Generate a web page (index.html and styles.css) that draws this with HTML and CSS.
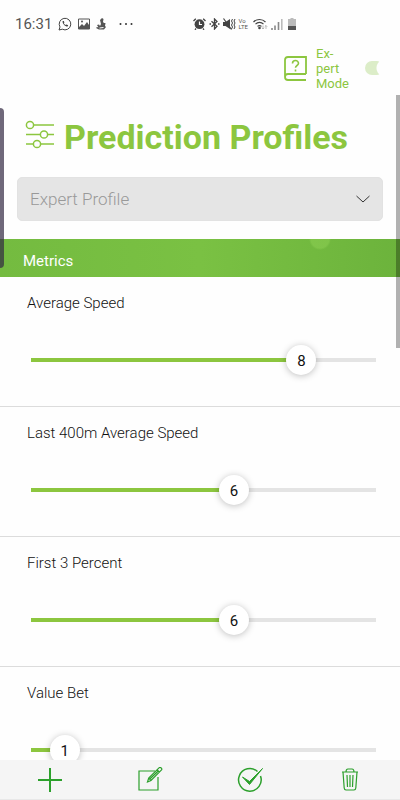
FILE: index.html
```html
<!DOCTYPE html>
<html lang="en">
<head>
    <meta charset="UTF-8">
    <meta name="viewport" content="width=device-width, initial-scale=1.0">
    <title>Prediction Profiles</title>
    <link rel="stylesheet" href="styles.css">
</head>
<body>
    <div class="status-bar">
        <span class="time">16:31</span>
        <div class="status-left">
            <svg width="14" height="14" viewBox="0 0 14 14" fill="none" stroke="#444">
                <path d="M1 13l1-3a5.800 5.800 0 1 1 2.300 2.200z"/>
                <path d="M4.700 4c-.8 2.200 2.300 5.600 4.900 5.600l.6-1.300-1.700-.9-.9.700C6.700 7.600 6.200 7 5.800 6.200l.6-.7-.6-1.500z" fill="#444" stroke="none"/>
            </svg>
            <svg width="12" height="12" viewBox="0 0 12 12">
                <path d="M.5 1h11v10H.5z" fill="none" stroke="#555"/>
                <path d="M1 9l3-3 2 2 3-4 2 3v4H1z" fill="#555"/>
                <circle cx="4" cy="3.500" r="1" fill="#555"/>
            </svg>
            <svg width="10" height="12" viewBox="0 0 10 12" fill="#555">
                <path d="M4 2l2-2 1.500 1L7 4l1 1 1.500 0L9 8l1 1-2 2.500H3L0 10l1-1 1.500.500L1 7l2-.500 1 1.500 1-2z"/>
                <path d="M3.500 10l4-.500" stroke="#fff"/>
            </svg>
            <svg class="more" width="14" height="4" viewBox="0 0 14 4" fill="#333">
                <circle cx="1.500" cy="2" r="1"/><circle cx="7" cy="2" r="1"/><circle cx="12.500" cy="2" r="1"/>
            </svg>
        </div>
        <div class="status-right">
            <!-- alarm -->
            <svg width="13" height="12" viewBox="0 0 13 12">
                <circle cx="6.500" cy="6.200" r="4.900" fill="#444"/>
                <path d="M.5 3l2.300-2.300M12.500 3L10.200.700M3 10.500l-1 1.300M10 10.500l1 1.300" stroke="#444" stroke-width="1.300"/>
                <path d="M6.500 3.500v3H9" fill="none" stroke="#fff" stroke-width="1.200"/>
            </svg>
            <!-- bluetooth -->
            <svg width="11" height="12" viewBox="0 0 11 12" fill="none" stroke="#444" stroke-width="1.300">
                <path d="M2.500 3.300l5.500 5L5.500 11V1L8 3.500 2.500 8.700"/>
                <path d="M.5 6h1.500M9 6h1.500"/>
            </svg>
            <!-- muted -->
            <svg width="13" height="12" viewBox="0 0 13 12">
                <path d="M0 4h2.500L7 1v10L2.500 8H0z" fill="#444"/>
                <path d="M.5.500l8 11" stroke="#444" stroke-width="1.200"/>
                <path d="M9.500 1l-1 2 1 2-1 2 1 2-1 2M12 1l-1 2 1 2-1 2 1 2-1 2" fill="none" stroke="#444"/>
            </svg>
            <span class="volte">Vo<br>LTE</span>
            <!-- wifi -->
            <svg class="wifi" width="15" height="12" viewBox="0 0 15 12" fill="none" stroke="#444" stroke-width="1.200">
                <path d="M.5 4a8.500 8.500 0 0 1 12 0M2.500 6.200a5.500 5.500 0 0 1 8 0M4.500 8.400a3 3 0 0 1 4 0"/>
                <circle cx="6.500" cy="10" r=".7" fill="#444"/>
                <path d="M10 7.500v3.500M8.800 9.800L10 11l1.200-1.200M13 11V7.500M11.800 8.700L13 7.500l1.200 1.200" stroke="#aaa" stroke-width=".8"/>
            </svg>
            <!-- signal -->
            <svg width="12" height="12" viewBox="0 0 12 12">
                <path d="M1 10v2M4 7.500V12M7.500 4v8" stroke="#888" stroke-width="1.600"/>
                <path d="M10.800 1v11" stroke="#bbb" stroke-width="1.600"/>
            </svg>
            <!-- battery -->
            <svg class="battery" width="8" height="12" viewBox="0 0 8 12">
                <path d="M2.500 0h3v1H8v8H0V1h2.500z" fill="#bbb"/>
                <path d="M0 8h8v4H0z" fill="#555"/>
            </svg>
        </div>
    </div>

    <header class="top-bar">
        <svg width="23" height="25" viewBox="0 0 23 25" fill="none" stroke="#8cc63f" stroke-width="1.800">
            <path d="M22 18V1H4Q1 1 1 4v17q0 3 3 3h18M1 21q0-3 3-3h18"/>
            <path d="M8.500 7.500C8.500 3.500 14.500 3.700 14.500 7.300c0 2.200-3 2.200-3 4.400M11.500 13.500v2" stroke-width="1.600"/>
        </svg>
        <label class="expert-label" for="expertMode">Ex&#8209;<br>pert<br>Mode</label>
        <input class="expert-toggle" type="checkbox" id="expertMode">
    </header>

    <main class="content">
        <div class="title-row">
            <svg width="30" height="30" viewBox="0 0 30 30" fill="none" stroke="#8cc63f" stroke-width="1.500">
                <path d="M8.500 5H29M1 14.500h14M23 14.500h6M1 24h7M16 24h13"/>
                <circle cx="5" cy="5" r="3.600"/>
                <circle cx="19" cy="14.500" r="3.600"/>
                <circle cx="12" cy="24" r="3.600"/>
            </svg>
            <h1>Prediction Profiles</h1>
        </div>

        <div class="profile-picker">
            <select class="profile-select" aria-label="Profile">
                <option>Expert Profile</option>
            </select>
            <svg class="chevron" width="16" height="8" viewBox="0 0 16 8" fill="none" stroke="#333">
                <path d="M1.500 1L8 7l6.500-6"/>
            </svg>
        </div>

        <h2 class="section-title">Metrics</h2>

        <div class="metric">
            <label for="averageSpeed">Average Speed</label>
            <div class="slider" style="--value: 8">
                <input type="range" id="averageSpeed" min="0" max="10" value="8">
                <output for="averageSpeed">8</output>
            </div>
        </div>
        <div class="metric">
            <label for="lastSpeed">Last 400m Average Speed</label>
            <div class="slider" style="--value: 6">
                <input type="range" id="lastSpeed" min="0" max="10" value="6">
                <output for="lastSpeed">6</output>
            </div>
        </div>
        <div class="metric">
            <label for="firstPercent">First 3 Percent</label>
            <div class="slider" style="--value: 6">
                <input type="range" id="firstPercent" min="0" max="10" value="6">
                <output for="firstPercent">6</output>
            </div>
        </div>
        <div class="metric">
            <label for="valueBet">Value Bet</label>
            <div class="slider" style="--value: 1">
                <input type="range" id="valueBet" min="0" max="10" value="1">
                <output for="valueBet">1</output>
            </div>
        </div>
    </main>

    <nav class="toolbar">
        <button type="button" aria-label="Add">
            <svg width="26" height="26" viewBox="0 0 26 26" fill="none" stroke="#2ca02c" stroke-width="2">
                <path d="M13 1v24M1 13h24"/>
            </svg>
        </button>
        <button type="button" aria-label="Edit">
            <svg width="26" height="26" viewBox="0 0 26 26" fill="none" stroke="#2ca02c" stroke-width="1.200">
                <path d="M18 4H2v19h19V10"/>
                <path d="M10.500 15l1.200-4L22 .9q1-1 2.200.1t.100 2.200L14 13.500zM11.700 11l2.300 2.500M20 2.800L22.300 5M12.800 12L21.500 3.800"/>
            </svg>
        </button>
        <button type="button" aria-label="Apply">
            <svg width="26" height="26" viewBox="0 0 26 26" fill="none" stroke="#2ca02c" stroke-width="1.500">
                <path d="M20.500 4.500A11.300 11.300 0 1 0 23.500 9"/>
                <path d="M5.500 10l7 4.500 13-13L12.500 17.500z" fill="#2ca02c" stroke-width="1"/>
            </svg>
        </button>
        <button type="button" aria-label="Delete">
            <svg width="26" height="26" viewBox="0 0 26 26" fill="none" stroke="#2ca02c" stroke-width="1.200">
                <path d="M5 5h16M9 5q0-3 2-3h4q2 0 2 3M6 5l1.200 16q.2 2 1.800 2h8q1.600 0 1.800-2L20 5M10 8l.5 12M13 8v12M16 8l-.5 12"/>
            </svg>
        </button>
    </nav>

    <div class="edge-handle"></div>
    <div class="scroll-thumb"></div>

    <script>
        document.querySelectorAll('.slider input').forEach(function(input) {
            input.addEventListener('input', function() {
                input.parentElement.style.setProperty('--value', input.value);
                input.nextElementSibling.textContent = input.value;
            });
        });
    </script>
</body>
</html>
```
FILE: styles.css
```css
* {
    margin: 0;
    padding: 0;
    box-sizing: border-box;
}

body {
    font-family: Roboto, sans-serif;
    font-weight: 300;
    background: #fefefe;
    color: #111;
    height: 100vh;
    display: flex;
    flex-direction: column;
    overflow: hidden;
}

svg {
    display: block;
    flex-shrink: 0;
}

.status-bar {
    display: flex;
    align-items: center;
    height: 48px;
    padding: 0 104px 0 15px;
    flex-shrink: 0;
}

.time {
    font-size: 15px;
    font-weight: 400;
    color: #555;
}

.status-left {
    display: flex;
    align-items: center;
    gap: 6px;
    margin-left: 6px;
}

.more {
    margin-left: 7px;
}

.status-right {
    display: flex;
    align-items: center;
    gap: 3px;
    margin-left: auto;
}

.volte {
    font-size: 6px;
    line-height: 6px;
    font-weight: 400;
    color: #555;
}

.wifi,
.battery {
    margin-left: 2px;
}

.top-bar {
    display: flex;
    align-items: center;
    justify-content: flex-end;
    height: 47px;
    flex-shrink: 0;
    padding: 0 20px 7px 0;
    color: #8cc63f;
}

.expert-label {
    font-size: 13px;
    line-height: 15px;
    font-weight: 400;
    width: 49px;
    margin-left: 9px;
}

.expert-toggle {
    appearance: none;
    width: 15px;
    height: 14px;
    border-radius: 7px 3px 3px 7px;
    background: radial-gradient(circle at 20px 7px, #fefefe 8px, #dcedc8 9px);
}

.content {
    flex: 1;
    min-height: 0;
    overflow: hidden;
}

.title-row {
    display: flex;
    align-items: center;
    gap: 9px;
    height: 82px;
    padding: 2px 0 0 25px;
}

.title-row svg {
    margin-bottom: 4px;
}

h1 {
    font-size: 34px;
    line-height: 40px;
    font-weight: 700;
    color: #8cc63f;
    white-space: nowrap;
}

.profile-picker {
    position: relative;
    margin: 0 17px 18px;
}

.profile-select {
    display: block;
    appearance: none;
    width: 100%;
    height: 44px;
    padding: 0 12px;
    border: 1px solid #e2e2e2;
    border-radius: 5px;
    background: #e5e5e5;
    color: #999;
    font-family: inherit;
    font-size: 17px;
    font-weight: 300;
}

.chevron {
    position: absolute;
    right: 12px;
    top: 18px;
    pointer-events: none;
}

.section-title {
    height: 38px;
    padding: 12px 23px 0;
    font-size: 15px;
    line-height: 20px;
    font-weight: 400;
    color: #fff;
    background:
        radial-gradient(circle at 80% 0, rgba(150, 215, 90, 0.4) 9px, transparent 11px),
        linear-gradient(90deg, #74bb40, #7ac143 50%, #6cb33c);
}

.metric {
    height: 130px;
    padding: 16px 24px 0 27px;
    border-bottom: 1px solid #dcdcdc;
}

.metric label {
    display: block;
    font-size: 15px;
    line-height: 20px;
}

/* the thumb starts centred on the left end of the track */
.slider {
    position: relative;
    height: 30px;
    margin: 32px 0 0 4px;
    background:
        linear-gradient(#8cc63f, #8cc63f) left center / calc(var(--value) * 9.8%) 4px no-repeat,
        linear-gradient(#e4e4e4, #e4e4e4) left center / 100% 4px no-repeat;
}

.slider input {
    display: block;
    appearance: none;
    width: calc(98% + 30px);
    height: 30px;
    margin-left: -15px;
    background: transparent;
}

.slider input::-webkit-slider-thumb {
    appearance: none;
    width: 30px;
    height: 30px;
    border-radius: 50%;
    background: #fff;
    box-shadow: 0 1px 7px rgba(0, 0, 0, 0.25);
}

.slider output {
    position: absolute;
    top: 0;
    left: calc(var(--value) * 9.8%);
    width: 30px;
    margin-left: -15px;
    font-size: 15px;
    line-height: 32px;
    font-weight: 400;
    text-align: center;
    pointer-events: none;
}

.toolbar {
    display: flex;
    height: 40px;
    flex-shrink: 0;
    background: #f5f5f5;
    border-bottom: 1px solid #e8e8e8;
}

.toolbar button {
    flex: 1;
    display: flex;
    align-items: center;
    justify-content: center;
    border: none;
    background: transparent;
    cursor: pointer;
}

.edge-handle {
    position: absolute;
    left: 0;
    top: 108px;
    width: 4px;
    height: 160px;
    border-radius: 0 4px 4px 0;
    background: rgba(50, 40, 65, 0.7);
}

.scroll-thumb {
    position: absolute;
    right: 0;
    top: 95px;
    width: 4px;
    height: 253px;
    background: rgba(0, 0, 0, 0.3);
}
```
